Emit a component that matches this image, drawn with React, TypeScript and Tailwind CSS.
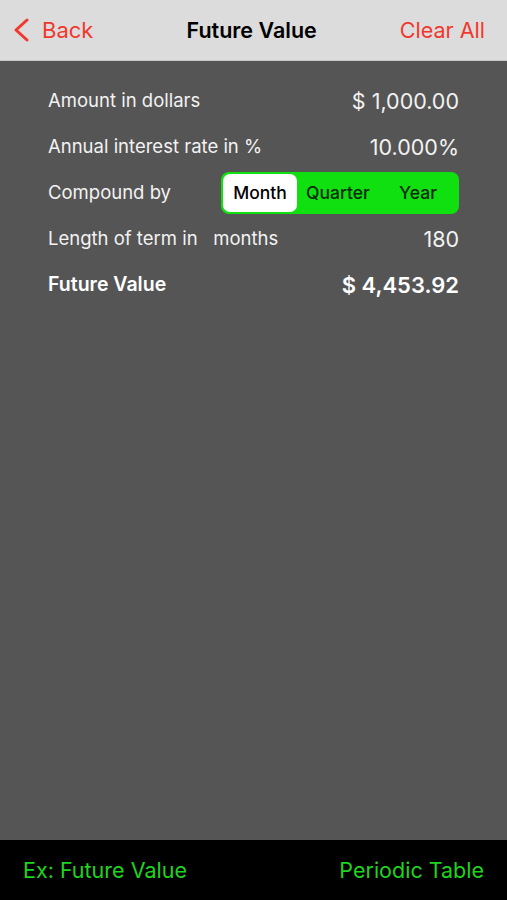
export default function App() {
  const rows = [
    { label: "Amount in dollars", value: "$ 1,000.00" },
    { label: "Annual interest rate in %", value: "10.000%" },
  ];
  return (
    <div className="flex h-[900px] w-full flex-col bg-[#555555] font-['Inter',sans-serif]">
      <header className="flex h-[61px] shrink-0 items-center justify-between border-b border-[#c8c8c8] bg-[#dcdcdc] px-[13px]">
        <div className="flex items-center gap-[12px] text-[#f0382e]">
          <svg width="17" height="24" viewBox="0 0 17 24" fill="none">
            <path d="M14 2 L3 12 L14 22" stroke="#f0382e" strokeWidth="3" strokeLinecap="round" strokeLinejoin="round" />
          </svg>
          <span className="text-[22px]">Back</span>
        </div>
        <span className="pl-[10px] text-[21.5px] font-semibold text-black">Future Value</span>
        <span className="pr-[9px] text-[21.5px] text-[#f0382e]">Clear All</span>
      </header>

      <main className="flex flex-1 flex-col px-[48px] text-white">
        <div className="flex flex-col pt-[17px]">
          {rows.map((r) => (
            <div key={r.label} className="flex h-[46px] items-center justify-between">
              <span className="text-[18.5px] text-[#f2f2f2]">{r.label}</span>
              <span className="text-[21.5px] text-[#f2f2f2]">{r.value}</span>
            </div>
          ))}
          <div className="flex h-[46px] items-center justify-between">
            <span className="text-[18.5px] text-[#f2f2f2]">Compound by</span>
            <div className="flex h-[42px] w-[238px] items-center rounded-[8px] bg-[#10e010] p-[2px]">
              <div className="flex h-full w-[74px] items-center justify-center rounded-[7px] bg-white text-[17.5px] font-medium text-black">
                Month
              </div>
              <div className="flex h-full flex-1 items-center justify-center text-[17.5px] font-medium text-[#0a2a0a]">
                Quarter
              </div>
              <div className="flex h-full w-[78px] items-center justify-center text-[17.5px] font-medium text-[#0a2a0a]">
                Year
              </div>
            </div>
          </div>
          <div className="flex h-[46px] items-center justify-between">
            <span className="text-[18.5px] text-[#f2f2f2]">
              Length of term in&nbsp;&nbsp;&nbsp;months
            </span>
            <span className="text-[21.5px] text-[#f2f2f2]">180</span>
          </div>
          <div className="flex h-[46px] items-center justify-between">
            <span className="text-[19.5px] font-semibold text-white">Future Value</span>
            <span className="text-[22px] font-semibold text-white">$ 4,453.92</span>
          </div>
        </div>
      </main>

      <footer className="flex h-[60px] shrink-0 items-center justify-between bg-black px-[23px] text-[21.5px] text-[#1ed41e]">
        <span>Ex: Future Value</span>
        <span>Periodic Table</span>
      </footer>
    </div>
  );
}
